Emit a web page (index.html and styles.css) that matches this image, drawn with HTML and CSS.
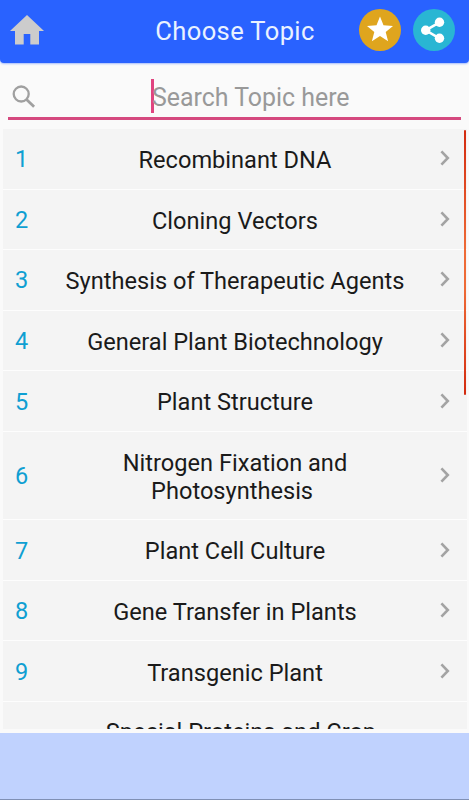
FILE: index.html
```
<!DOCTYPE html>
<html lang="en">
<head>
<meta charset="utf-8">
<title>Choose Topic</title>
<link rel="stylesheet" href="styles.css">
</head>
<body>
<svg class="defs" width="0" height="0"><symbol id="chevron" viewBox="0 0 10 16"><path d="M1.4 1.4 7.8 8l-6.4 6.6" fill="none" stroke="#a3a3a3" stroke-width="2.6"/></symbol></svg>
<header class="bar">
  <svg class="home" viewBox="0 0 34 30"><path fill="#ccc" d="M17 0 34 16H29V29.5H20.3V19H13.7V29.5H5V16H0Z"/></svg>
  <h1 class="title">Choose Topic</h1>
  <div class="actions">
    <svg class="round" viewBox="0 0 42 42"><circle cx="21" cy="21" r="21" fill="#dfa51e"/><path fill="#fff" d="m21 7.5 3.5 8.8 9.5.6-7.3 6 2.4 9.3-8.1-5.1-8.1 5.1 2.4-9.3-7.3-6 9.5-.6Z"/></svg>
    <svg class="round" viewBox="0 0 42 42"><circle cx="21" cy="21" r="21" fill="#29b6d3"/><path d="M26.5 13.3 12.7 21.3l13.8 8" fill="none" stroke="#fff" stroke-width="2.5"/><g fill="#fff"><circle cx="26.5" cy="13.3" r="4.7"/><circle cx="12.7" cy="21.3" r="4.7"/><circle cx="26.5" cy="29.3" r="4.7"/></g></svg>
  </div>
</header>
<div class="search">
  <svg class="glass" viewBox="0 0 24 24"><circle cx="9.2" cy="9" r="7.5" fill="none" stroke="#a0a0a0" stroke-width="2.3"/><path d="m14.5 14.5 7.6 7.2" stroke="#a0a0a0" stroke-width="2.8"/></svg>
  <span class="field"><i class="caret"></i>Search Topic here</span>
</div>
<main class="list">
  <div class="row"><span class="num">1</span><span class="name">Recombinant DNA</span><svg class="chev"><use href="#chevron"/></svg></div>
  <div class="row"><span class="num">2</span><span class="name">Cloning Vectors</span><svg class="chev"><use href="#chevron"/></svg></div>
  <div class="row"><span class="num">3</span><span class="name">Synthesis of Therapeutic Agents</span><svg class="chev"><use href="#chevron"/></svg></div>
  <div class="row"><span class="num">4</span><span class="name">General Plant Biotechnology</span><svg class="chev"><use href="#chevron"/></svg></div>
  <div class="row"><span class="num">5</span><span class="name">Plant Structure</span><svg class="chev"><use href="#chevron"/></svg></div>
  <div class="row tall"><span class="num">6</span><span class="name">Nitrogen Fixation and<br>Photosynthesis&nbsp;</span><svg class="chev"><use href="#chevron"/></svg></div>
  <div class="row"><span class="num">7</span><span class="name">Plant Cell Culture</span><svg class="chev"><use href="#chevron"/></svg></div>
  <div class="row"><span class="num">8</span><span class="name">Gene Transfer in Plants</span><svg class="chev"><use href="#chevron"/></svg></div>
  <div class="row"><span class="num">9</span><span class="name">Transgenic Plant</span><svg class="chev"><use href="#chevron"/></svg></div>
  <div class="row tall last"><span class="num"></span><span class="name">Special Proteins and Crop<br>&nbsp;</span><span class="chev"></span></div>
  <div class="thumb"></div>
</main>
<footer class="banner"></footer>
</body>
</html>
```
FILE: styles.css
```
* { box-sizing: border-box; }
body {
  margin: 0;
  width: 469px;
  height: 800px;
  overflow: hidden;
  display: flex;
  flex-direction: column;
  background: #fafafa;
  font-family: Roboto, "Liberation Sans", sans-serif;
}
.defs { position: absolute; }
.bar {
  flex: none;
  height: 62.5px;
  display: grid;
  grid-template-columns: 145px 1fr 145px;
  align-items: center;
  background: #2962ff;
  border-radius: 0 0 4px 4px;
  box-shadow: 0 1px 2px #2962ff66;
}
.home { width: 34px; height: 30px; margin: -3px 0 0 10px; }
.title {
  margin: 0;
  padding-left: 1px;
  text-align: center;
  font-size: 25.5px;
  font-weight: 400;
  line-height: 30px;
  letter-spacing: .4px;
  color: #e9f2ff;
  white-space: nowrap;
}
.actions { display: flex; justify-content: flex-end; gap: 12px; padding: 0 14px 2px 0; }
.round { width: 42px; height: 42px; }
.search {
  flex: none;
  height: 57.5px;
  margin: 0 8px;
  display: grid;
  grid-template-columns: 34px 1fr 0;
  align-items: center;
  padding-top: 13px;
  border-bottom: 3px solid #d5497f;
}
.glass { width: 24px; height: 24px; margin: 1px 0 0 4px; }
.field {
  margin-left: 109px;
  display: flex;
  align-items: center;
  padding-top: 3px;
  font-size: 24.9px;
  line-height: 34px;
  color: #999;
  white-space: nowrap;
}
.caret { width: 2.5px; height: 34px; margin: -3px -1.5px 0 0; background: #e0447f; }
.list {
  position: relative;
  flex: none;
  height: 600px;
  margin: 9px 2px 0 3px;
  overflow: hidden;
}
.row {
  height: 60.6px;
  display: grid;
  grid-template-columns: 37px 1fr 37px;
  align-items: center;
  background: #f4f4f4;
  border-bottom: 1px solid #fdfdfd;
}
.row.tall { height: 88.3px; }
.num { padding: 1px 0 0 12px; font-size: 23.5px; color: #0f9fd2; }
.name {
  padding-top: 4px;
  text-align: center;
  font-size: 23.6px;
  line-height: 27.5px;
  color: #1a1a1a;
  white-space: nowrap;
}
.last .name { padding: 2px 0 0 12px; }
.chev { width: 10px; height: 16px; margin: -1px 0 0 10px; }
.thumb {
  position: absolute;
  top: 1px;
  right: 1px;
  width: 2.5px;
  height: 265px;
  border-radius: 1px;
  background: linear-gradient(#d32b10, #ee6a36 45%, #ee6a36 60%, #d32b10);
}
.banner {
  flex: none;
  height: 67px;
  margin-top: 4px;
  background: #c0d2fe;
  border-bottom: 1px solid #8090b4;
}
```
